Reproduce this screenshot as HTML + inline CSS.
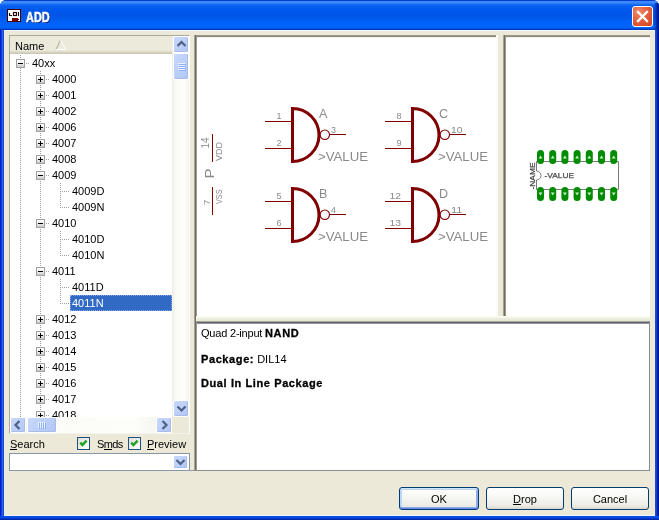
<!DOCTYPE html>
<html><head><meta charset="utf-8">
<style>
*{box-sizing:border-box;margin:0;padding:0}
html,body{width:659px;height:520px;overflow:hidden;background:#fff;font-family:"Liberation Sans",sans-serif;font-size:11px;color:#000}
.a{position:absolute}
#win{left:0;top:0;width:659px;height:520px;border-radius:6px 6px 0 0;background:#0842D6;overflow:hidden}
#title{left:0;top:0;width:659px;height:30px;background:linear-gradient(#0A3CCB 0px,#0A3CCB 1px,#3D8BFF 1px,#3A88FC 3px,#0D62F2 5px,#0058EE 9px,#0055E6 16px,#005EF5 21px,#0066FF 26px,#0062FA 28px,#0040C8 29px,#0036B0 30px)}
#lf{left:0;top:30px;width:4px;height:490px;background:linear-gradient(90deg,#0818CC 0,#0818CC 1px,#0A40E0 1px,#0A40E0 2px,#2264FF 2px,#2264FF 3px,#1A4CC0 3px)}
#rf{left:655px;top:30px;width:4px;height:490px;background:linear-gradient(90deg,#2A48B4 0,#2A48B4 1px,#0A42D2 1px,#0A42D2 2px,#0024A8 2px,#0024A8 3px,#001890 3px)}
#bf{left:0;top:516px;width:659px;height:4px;background:linear-gradient(#0A50EA 0,#0846DE 2px,#0030B8 3px,#001C9C 4px)}
#content{left:4px;top:30px;width:651px;height:486px;background:#ECE9D8;border-top:1px solid #F4F8FF;border-left:1px solid #E4ECFC;border-right:1px solid #E4ECFC;border-bottom:1px solid #F0F4FC}
#ttl{left:26px;top:9px;height:16px;line-height:16px;font-size:14px;font-weight:bold;color:#fff;-webkit-text-stroke:0.5px #fff;text-shadow:1px 1px 0 #0A1E80;transform:scaleX(0.78);transform-origin:0 0}
#close{left:632px;top:6px;width:21px;height:21px;border:1px solid #fff;border-radius:3px;background:radial-gradient(circle at 30% 25%,#F08A6A 0,#E3603E 45%,#D6431C 100%)}
/* tree */
#tvb{left:9px;top:35px;width:181px;height:399px;border-top:1px solid #ACA899;border-left:1px solid #ACA899;border-right:1px solid #fff;border-bottom:1px solid #F4F3EE;background:#fff}
#hdr{left:10px;top:36px;width:162px;height:18px;background:linear-gradient(#EBEADB 0,#EBEADB 14px,#E6E3D2 15px,#DCD8C6 16px,#D0CCBA 17px,#C8C4B2 18px)}
#hdrtxt{left:15px;top:39px;height:14px;line-height:14px;font-size:11px}
#tv{left:10px;top:54px;width:162px;height:363px;overflow:hidden;background:#fff}
.dv{position:absolute;width:1px;background:repeating-linear-gradient(#A0A0A0 0,#A0A0A0 1px,transparent 1px,transparent 2px)}
.dh{position:absolute;height:1px;background:repeating-linear-gradient(90deg,#A0A0A0 0,#A0A0A0 1px,transparent 1px,transparent 2px)}
.bx{position:absolute;width:9px;height:9px;border:1px solid #A0A0A0;background:linear-gradient(#fff 0,#F4F4F4 40%,#C8C8C8 100%)}
.ph{position:absolute;left:1px;top:3px;width:5px;height:1px;background:#000}
.pv{position:absolute;left:3px;top:1px;width:1px;height:5px;background:#000}
.ti{position:absolute;height:16px;line-height:16px;white-space:nowrap}
.sel{position:absolute;height:16px;background:#316AC5;outline:1px dotted #8AA8DC;outline-offset:-1px}
/* scrollbars */
.trk{background:linear-gradient(90deg,#EEEDE5 0,#FBFBF8 25%,#FDFDFA 75%,#F3F2EC 100%)}
.sb{position:absolute;border:1px solid #fff;border-radius:2px;background:linear-gradient(135deg,#C8D8FC 0,#BBCEF8 60%,#B0C6F6 100%);box-shadow:inset -1px -1px 0 #A8BCE8}
.sbt{position:absolute;border:1px solid #fff;border-radius:2px;background:linear-gradient(90deg,#CCDAFC 0,#C2D4FB 50%,#B8CCF8 100%);box-shadow:inset -1px -1px 0 #A8BCE8}
/* panes */
.pane{background:#fff}
.cb{position:absolute;width:13px;height:13px;border:1px solid #1C5180;background:linear-gradient(135deg,#DCDCD7 0,#F6F6F4 70%,#fff 100%)}
.btn{position:absolute;top:487px;height:23px;border:1px solid #003C74;border-radius:3px;background:linear-gradient(#FFFFFF 0,#F8F8F4 40%,#ECEBE4 85%,#D8D5C8 100%);text-align:center;line-height:23px;font-size:11px}
b{letter-spacing:0.6px;-webkit-text-stroke:0.3px #000}
</style></head><body><div id="root" class="a" style="left:0;top:0;width:659px;height:520px;overflow:hidden;will-change:transform">
<div id="win" class="a">
  <div id="title" class="a"></div>
  <div class="a" style="left:654px;top:3px;width:5px;height:27px;background:linear-gradient(90deg,rgba(0,40,170,0) 0,rgba(0,40,170,.5) 1px,#0A3CC0 2px,#0028A8 3px,#001890 4px)"></div>
  <div id="lf" class="a"></div><div id="rf" class="a"></div><div id="bf" class="a"></div>
  <div id="content" class="a"></div>
</div>
<!-- title icon -->
<svg class="a" style="left:7px;top:9px" width="14" height="13" viewBox="0 0 14 13">
  <rect x="0" y="0" width="14" height="13" fill="#3A0010"/>
  <rect x="1" y="1" width="12" height="11" fill="#fff"/>
  <path d="M2.5,4 V6.5 H5" stroke="#1A1A10" stroke-width="1.2" fill="none"/>
  <rect x="6.5" y="3.5" width="3" height="3" fill="none" stroke="#300010" stroke-width="1.2"/>
  <rect x="11" y="3" width="1" height="4" fill="#200010"/>
  <rect x="5" y="9" width="6" height="3" fill="#7A0000"/>
  <rect x="11" y="10" width="1" height="1" fill="#400010"/>
</svg>
<div id="ttl" class="a">ADD</div>
<div id="close" class="a"><svg width="19" height="19" viewBox="0 0 19 19" style="position:absolute;left:0;top:0"><path d="M5,5 L14,14 M14,5 L5,14" stroke="#fff" stroke-width="2.3" stroke-linecap="square"/></svg></div>

<!-- tree view -->
<div id="tvb" class="a"></div>
<div id="hdr" class="a"></div>
<div id="hdrtxt" class="a">Name</div>
<svg class="a" style="left:55px;top:39px" width="12" height="12" viewBox="0 0 12 12"><path d="M1,10.5 L5.5,1" stroke="#ACA899" stroke-width="1"/><path d="M5.5,1 L10.5,10.5 H1" stroke="#fff" stroke-width="1" fill="none"/></svg>
<div id="tv" class="a">
<div class="dv" style="left:10px;top:1px;height:4px"></div>
<div class="dv" style="left:10px;top:14px;height:363px"></div>
<div class="dv" style="left:30px;top:17px;height:360px"></div>
<div class="dh" style="left:16px;top:9px;width:4px"></div>
<div class="bx" style="left:6px;top:5px"><i class="ph"></i></div>
<div class="ti" style="left:22px;top:1px">40xx</div>
<div class="dh" style="left:36px;top:25px;width:4px"></div>
<div class="bx" style="left:26px;top:21px"><i class="ph"></i><i class="pv"></i></div>
<div class="ti" style="left:42px;top:17px">4000</div>
<div class="dh" style="left:36px;top:41px;width:4px"></div>
<div class="bx" style="left:26px;top:37px"><i class="ph"></i><i class="pv"></i></div>
<div class="ti" style="left:42px;top:33px">4001</div>
<div class="dh" style="left:36px;top:57px;width:4px"></div>
<div class="bx" style="left:26px;top:53px"><i class="ph"></i><i class="pv"></i></div>
<div class="ti" style="left:42px;top:49px">4002</div>
<div class="dh" style="left:36px;top:73px;width:4px"></div>
<div class="bx" style="left:26px;top:69px"><i class="ph"></i><i class="pv"></i></div>
<div class="ti" style="left:42px;top:65px">4006</div>
<div class="dh" style="left:36px;top:89px;width:4px"></div>
<div class="bx" style="left:26px;top:85px"><i class="ph"></i><i class="pv"></i></div>
<div class="ti" style="left:42px;top:81px">4007</div>
<div class="dh" style="left:36px;top:105px;width:4px"></div>
<div class="bx" style="left:26px;top:101px"><i class="ph"></i><i class="pv"></i></div>
<div class="ti" style="left:42px;top:97px">4008</div>
<div class="dh" style="left:36px;top:121px;width:4px"></div>
<div class="bx" style="left:26px;top:117px"><i class="ph"></i></div>
<div class="ti" style="left:42px;top:113px">4009</div>
<div class="dv" style="left:50px;top:129px;height:9px"></div>
<div class="dh" style="left:52px;top:137px;width:7px"></div>
<div class="ti" style="left:62px;top:129px">4009D</div>
<div class="dv" style="left:50px;top:137px;height:17px"></div>
<div class="dh" style="left:52px;top:153px;width:7px"></div>
<div class="ti" style="left:62px;top:145px">4009N</div>
<div class="dh" style="left:36px;top:169px;width:4px"></div>
<div class="bx" style="left:26px;top:165px"><i class="ph"></i></div>
<div class="ti" style="left:42px;top:161px">4010</div>
<div class="dv" style="left:50px;top:177px;height:9px"></div>
<div class="dh" style="left:52px;top:185px;width:7px"></div>
<div class="ti" style="left:62px;top:177px">4010D</div>
<div class="dv" style="left:50px;top:185px;height:17px"></div>
<div class="dh" style="left:52px;top:201px;width:7px"></div>
<div class="ti" style="left:62px;top:193px">4010N</div>
<div class="dh" style="left:36px;top:217px;width:4px"></div>
<div class="bx" style="left:26px;top:213px"><i class="ph"></i></div>
<div class="ti" style="left:42px;top:209px">4011</div>
<div class="dv" style="left:50px;top:225px;height:9px"></div>
<div class="dh" style="left:52px;top:233px;width:7px"></div>
<div class="ti" style="left:62px;top:225px">4011D</div>
<div class="dv" style="left:50px;top:233px;height:17px"></div>
<div class="dh" style="left:52px;top:249px;width:7px"></div>
<div class="sel" style="left:60px;top:241px;width:102px"></div>
<div class="ti" style="left:62px;top:241px;color:#fff">4011N</div>
<div class="dh" style="left:36px;top:265px;width:4px"></div>
<div class="bx" style="left:26px;top:261px"><i class="ph"></i><i class="pv"></i></div>
<div class="ti" style="left:42px;top:257px">4012</div>
<div class="dh" style="left:36px;top:281px;width:4px"></div>
<div class="bx" style="left:26px;top:277px"><i class="ph"></i><i class="pv"></i></div>
<div class="ti" style="left:42px;top:273px">4013</div>
<div class="dh" style="left:36px;top:297px;width:4px"></div>
<div class="bx" style="left:26px;top:293px"><i class="ph"></i><i class="pv"></i></div>
<div class="ti" style="left:42px;top:289px">4014</div>
<div class="dh" style="left:36px;top:313px;width:4px"></div>
<div class="bx" style="left:26px;top:309px"><i class="ph"></i><i class="pv"></i></div>
<div class="ti" style="left:42px;top:305px">4015</div>
<div class="dh" style="left:36px;top:329px;width:4px"></div>
<div class="bx" style="left:26px;top:325px"><i class="ph"></i><i class="pv"></i></div>
<div class="ti" style="left:42px;top:321px">4016</div>
<div class="dh" style="left:36px;top:345px;width:4px"></div>
<div class="bx" style="left:26px;top:341px"><i class="ph"></i><i class="pv"></i></div>
<div class="ti" style="left:42px;top:337px">4017</div>
<div class="dh" style="left:36px;top:361px;width:4px"></div>
<div class="bx" style="left:26px;top:357px"><i class="ph"></i><i class="pv"></i></div>
<div class="ti" style="left:42px;top:353px">4018</div>
</div>
<!-- vscroll -->
<div class="a trk" style="left:172px;top:36px;width:17px;height:381px"></div>
<div class="sb" style="left:173px;top:36px;width:16px;height:17px"><svg width="15" height="15" viewBox="0 0 15 15" style="position:absolute;left:0;top:0"><path d="M3.5,9 L7.5,5 L11.5,9" stroke="#4D6185" stroke-width="2.2" fill="none"/></svg></div>
<div class="sb" style="left:173px;top:53px;width:16px;height:27px;"><svg width="15" height="25" style="position:absolute;left:0;top:0"><path d="M4,9.5 H11 M4,11.5 H11 M4,13.5 H11 M4,15.5 H11" stroke="#EEF4FE" stroke-width="1"/><path d="M5,10.5 H12 M5,12.5 H12 M5,14.5 H12 M5,16.5 H12" stroke="#8CB0F8" stroke-width="1"/></svg></div>
<div class="sb" style="left:173px;top:400px;width:16px;height:17px"><svg width="15" height="15" viewBox="0 0 15 15" style="position:absolute;left:0;top:0"><path d="M3.5,5.5 L7.5,9.5 L11.5,5.5" stroke="#4D6185" stroke-width="2.2" fill="none"/></svg></div>
<!-- hscroll -->
<div class="a trk" style="left:10px;top:417px;width:162px;height:16px"></div>
<div class="sb" style="left:10px;top:417px;width:16px;height:16px"><svg width="14" height="14" viewBox="0 0 14 14" style="position:absolute;left:0;top:0"><path d="M8.5,3 L4.5,7 L8.5,11" stroke="#4D6185" stroke-width="2.2" fill="none"/></svg></div>
<div class="sb" style="left:27px;top:417px;width:30px;height:16px"><svg width="28" height="14" style="position:absolute;left:0;top:0"><path d="M10.5,4 V10 M12.5,4 V10 M14.5,4 V10 M16.5,4 V10" stroke="#EEF4FE" stroke-width="1"/><path d="M11.5,5 V11 M13.5,5 V11 M15.5,5 V11 M17.5,5 V11" stroke="#8CB0F8" stroke-width="1"/></svg></div>
<div class="sb" style="left:156px;top:417px;width:16px;height:16px"><svg width="14" height="14" viewBox="0 0 14 14" style="position:absolute;left:0;top:0"><path d="M5.5,3 L9.5,7 L5.5,11" stroke="#4D6185" stroke-width="2.2" fill="none"/></svg></div>
<div class="a" style="left:172px;top:417px;width:17px;height:16px;background:#ECE9D8"></div>

<!-- search row -->
<div class="a" style="left:10px;top:437px;height:14px;line-height:14px"><span style="border-bottom:1px solid #000;line-height:10px;display:inline-block">S</span>earch</div>
<div class="cb" style="left:77px;top:437px"><svg width="11" height="11" viewBox="0 0 11 11" style="position:absolute;left:0;top:0"><path d="M2.3,4.6 L4.4,7 L8.6,2.6" stroke="#21A121" stroke-width="2.5" fill="none"/></svg></div>
<div class="a" style="left:97px;top:437px;height:14px;line-height:14px;letter-spacing:-0.6px">S<span style="border-bottom:1px solid #000;line-height:10px;display:inline-block">m</span>ds</div>
<div class="cb" style="left:128px;top:437px"><svg width="11" height="11" viewBox="0 0 11 11" style="position:absolute;left:0;top:0"><path d="M2.3,4.6 L4.4,7 L8.6,2.6" stroke="#21A121" stroke-width="2.5" fill="none"/></svg></div>
<div class="a" style="left:147px;top:437px;height:14px;line-height:14px"><span style="border-bottom:1px solid #000;line-height:10px;display:inline-block">P</span>review</div>
<!-- combo -->
<div class="a" style="left:9px;top:453px;width:181px;height:18px;border:1px solid #8797A8;background:#fff"></div>
<div class="a" style="left:190px;top:470px;width:4px;height:1px;background:#9A9A98"></div>
<div class="sb" style="left:173px;top:455px;width:15px;height:14px"><svg width="13" height="12" viewBox="0 0 13 12" style="position:absolute;left:0;top:0"><path d="M2.5,4 L6.5,8 L10.5,4" stroke="#4D6185" stroke-width="2.2" fill="none"/></svg></div>

<!-- schematic pane -->
<div class="a" style="left:194px;top:35px;width:304px;height:282px;background:linear-gradient(90deg,#A4A296 0,#A4A296 1px,#716F64 1px,#716F64 2px,#9C998C 2px,#9C998C 3px,transparent 3px),linear-gradient(#9C9888 0,#9C9888 1px,#8C887C 1px,#8C887C 2px,#F0F0EC 2px,#F0F0EC 3px,transparent 3px),#fff;box-shadow:inset -2px 0 0 #FBFBFB,inset 0 -1px 0 #FAFCF0"></div>
<svg class="a" style="left:0;top:0" width="659" height="520" viewBox="0 0 659 520"><g font-family="Liberation Sans" fill="#8a8a8a"><path d="M292.5,108.5 L292.5,161.5 A26.5,26.5 0 0 0 292.5,108.5 Z" fill="none" stroke="#800000" stroke-width="3"/>
<path d="M265,121.5 H291 M265,148.5 H291 M329,134.5 H346" stroke="#800000" stroke-width="1" fill="none"/>
<circle cx="324.8" cy="134.7" r="4.7" fill="none" stroke="#800000" stroke-width="1.1"/>
<text x="281.5" y="119.2" font-size="9" text-anchor="end">1</text>
<text x="281.5" y="146.2" font-size="9" text-anchor="end">2</text>
<text x="331" y="132.5" font-size="9">3</text>
<text x="319" y="118" font-size="12.5">A</text>
<text x="318" y="160.5" font-size="13.3" textLength="50" lengthAdjust="spacingAndGlyphs">&gt;VALUE</text>
<path d="M412.5,108.5 L412.5,161.5 A26.5,26.5 0 0 0 412.5,108.5 Z" fill="none" stroke="#800000" stroke-width="3"/>
<path d="M385,121.5 H411 M385,148.5 H411 M449,134.5 H466" stroke="#800000" stroke-width="1" fill="none"/>
<circle cx="444.8" cy="134.7" r="4.7" fill="none" stroke="#800000" stroke-width="1.1"/>
<text x="401.5" y="119.2" font-size="9" text-anchor="end">8</text>
<text x="401.5" y="146.2" font-size="9" text-anchor="end">9</text>
<text x="451" y="132.5" font-size="9" textLength="11.5" lengthAdjust="spacingAndGlyphs">10</text>
<text x="439" y="118" font-size="12.5">C</text>
<text x="438" y="160.5" font-size="13.3" textLength="50" lengthAdjust="spacingAndGlyphs">&gt;VALUE</text>
<path d="M292.5,188.5 L292.5,241.5 A26.5,26.5 0 0 0 292.5,188.5 Z" fill="none" stroke="#800000" stroke-width="3"/>
<path d="M265,201.5 H291 M265,228.5 H291 M329,214.5 H346" stroke="#800000" stroke-width="1" fill="none"/>
<circle cx="324.8" cy="214.7" r="4.7" fill="none" stroke="#800000" stroke-width="1.1"/>
<text x="281.5" y="199.2" font-size="9" text-anchor="end">5</text>
<text x="281.5" y="226.2" font-size="9" text-anchor="end">6</text>
<text x="331" y="212.5" font-size="9">4</text>
<text x="319" y="198" font-size="12.5">B</text>
<text x="318" y="240.5" font-size="13.3" textLength="50" lengthAdjust="spacingAndGlyphs">&gt;VALUE</text>
<path d="M412.5,188.5 L412.5,241.5 A26.5,26.5 0 0 0 412.5,188.5 Z" fill="none" stroke="#800000" stroke-width="3"/>
<path d="M385,201.5 H411 M385,228.5 H411 M449,214.5 H466" stroke="#800000" stroke-width="1" fill="none"/>
<circle cx="444.8" cy="214.7" r="4.7" fill="none" stroke="#800000" stroke-width="1.1"/>
<text x="389.5" y="199.2" font-size="9" textLength="11.5" lengthAdjust="spacingAndGlyphs">12</text>
<text x="389.5" y="226.2" font-size="9" textLength="11.5" lengthAdjust="spacingAndGlyphs">13</text>
<text x="451" y="212.5" font-size="9" textLength="11.5" lengthAdjust="spacingAndGlyphs">11</text>
<text x="439" y="198" font-size="12.5">D</text>
<text x="438" y="240.5" font-size="13.3" textLength="50" lengthAdjust="spacingAndGlyphs">&gt;VALUE</text>
<path d="M212.5,134 V162 M212.5,187 V215" stroke="#800000" stroke-width="1"/>
<text transform="translate(209,148.5) rotate(-90)" font-size="10" textLength="11" lengthAdjust="spacingAndGlyphs">14</text>
<text transform="translate(222,161) rotate(-90)" font-size="9.5" textLength="19" lengthAdjust="spacingAndGlyphs">VDD</text>
<text transform="translate(213.5,178.5) rotate(-90)" font-size="13" textLength="10" lengthAdjust="spacingAndGlyphs">P</text>
<text transform="translate(210,205) rotate(-90)" font-size="9.5">7</text>
<text transform="translate(222,204) rotate(-90)" font-size="9.5" textLength="14.5" lengthAdjust="spacingAndGlyphs">VSS</text></g></svg>
<!-- package pane -->
<div class="a" style="left:503px;top:35px;width:147px;height:282px;background:linear-gradient(90deg,#A4A296 0,#A4A296 1px,#716F64 1px,#716F64 2px,#9C998C 2px,#9C998C 3px,transparent 3px),linear-gradient(#9C9888 0,#9C9888 1px,#8C887C 1px,#8C887C 2px,#F0F0EC 2px,#F0F0EC 3px,transparent 3px),#fff;box-shadow:inset 0 -1px 0 #FAFCF0"></div>
<svg class="a" style="left:0;top:0" width="659" height="520" viewBox="0 0 659 520"><g font-family="Liberation Sans"><path d="M536.5,161.5 H618.5 V189.5 H536.5 V180 A4.5,4.5 0 0 0 536.5,171 Z" fill="none" stroke="#7a7a7a" stroke-width="1"/>
<rect x="537.0" y="150" width="7" height="14" rx="3.5" ry="3.5" fill="#008c00"/>
<path d="M538.5,158.5 L540.5,155.5 L542.5,158.5 Z" fill="#c8ecc8"/>
<rect x="537.0" y="187" width="7" height="14" rx="3.5" ry="3.5" fill="#008c00"/>
<path d="M538.5,192.5 L540.5,195.5 L542.5,192.5 Z" fill="#c8ecc8"/>
<rect x="549.2" y="150" width="7" height="14" rx="3.5" ry="3.5" fill="#008c00"/>
<path d="M550.7,158.5 L552.7,155.5 L554.7,158.5 Z" fill="#c8ecc8"/>
<rect x="549.2" y="187" width="7" height="14" rx="3.5" ry="3.5" fill="#008c00"/>
<path d="M550.7,192.5 L552.7,195.5 L554.7,192.5 Z" fill="#c8ecc8"/>
<rect x="561.4" y="150" width="7" height="14" rx="3.5" ry="3.5" fill="#008c00"/>
<path d="M562.9,158.5 L564.9,155.5 L566.9,158.5 Z" fill="#c8ecc8"/>
<rect x="561.4" y="187" width="7" height="14" rx="3.5" ry="3.5" fill="#008c00"/>
<path d="M562.9,192.5 L564.9,195.5 L566.9,192.5 Z" fill="#c8ecc8"/>
<rect x="573.6" y="150" width="7" height="14" rx="3.5" ry="3.5" fill="#008c00"/>
<path d="M575.1,158.5 L577.1,155.5 L579.1,158.5 Z" fill="#c8ecc8"/>
<rect x="573.6" y="187" width="7" height="14" rx="3.5" ry="3.5" fill="#008c00"/>
<path d="M575.1,192.5 L577.1,195.5 L579.1,192.5 Z" fill="#c8ecc8"/>
<rect x="585.8" y="150" width="7" height="14" rx="3.5" ry="3.5" fill="#008c00"/>
<path d="M587.3,158.5 L589.3,155.5 L591.3,158.5 Z" fill="#c8ecc8"/>
<rect x="585.8" y="187" width="7" height="14" rx="3.5" ry="3.5" fill="#008c00"/>
<path d="M587.3,192.5 L589.3,195.5 L591.3,192.5 Z" fill="#c8ecc8"/>
<rect x="598.0" y="150" width="7" height="14" rx="3.5" ry="3.5" fill="#008c00"/>
<path d="M599.5,158.5 L601.5,155.5 L603.5,158.5 Z" fill="#c8ecc8"/>
<rect x="598.0" y="187" width="7" height="14" rx="3.5" ry="3.5" fill="#008c00"/>
<path d="M599.5,192.5 L601.5,195.5 L603.5,192.5 Z" fill="#c8ecc8"/>
<rect x="610.2" y="150" width="7" height="14" rx="3.5" ry="3.5" fill="#008c00"/>
<path d="M611.7,158.5 L613.7,155.5 L615.7,158.5 Z" fill="#c8ecc8"/>
<rect x="610.2" y="187" width="7" height="14" rx="3.5" ry="3.5" fill="#008c00"/>
<path d="M611.7,192.5 L613.7,195.5 L615.7,192.5 Z" fill="#c8ecc8"/>
<text transform="translate(535,189.5) rotate(-90)" font-size="8" fill="#484848" stroke="#484848" stroke-width="0.25" textLength="27" lengthAdjust="spacingAndGlyphs">-NAME</text>
<text x="544.5" y="177.8" font-size="8" fill="#484848" stroke="#484848" stroke-width="0.25" textLength="29.5" lengthAdjust="spacingAndGlyphs">-VALUE</text></g></svg>
<!-- description pane -->
<div class="a" style="left:194px;top:321px;width:456px;height:150px;background:linear-gradient(90deg,#A4A296 0,#A4A296 1px,#716F64 1px,#716F64 2px,#9C998C 2px,#9C998C 3px,transparent 3px),linear-gradient(#A8A898 0,#A8A898 1px,#646470 1px,#646470 2px,#9494A0 2px,#9494A0 3px,transparent 3px),#fff;box-shadow:inset -1px -1px 0 #8A8E94"></div>
<div class="a" style="left:197px;top:316px;width:453px;height:5px;background:linear-gradient(#FAFCF0 0,#FAFCF0 1px,#F0F0E2 2px,#E6E6D6 5px)"></div>
<div class="a" style="left:194px;top:316px;width:3px;height:5px;background:linear-gradient(90deg,#A4A296 0,#A4A296 1px,#716F64 1px,#716F64 2px,#F4F2EA 2px)"></div>
<div class="a" style="left:201px;top:326px;line-height:14px;white-space:nowrap"><span style="letter-spacing:-0.2px">Quad 2-input </span><b>NAND</b></div>
<div class="a" style="left:201px;top:352px;line-height:14px;white-space:nowrap"><b>Package:</b> DIL14</div>
<div class="a" style="left:201px;top:376px;line-height:14px;white-space:nowrap"><b>Dual In Line Package</b></div>

<!-- buttons -->
<div class="btn" style="left:399px;width:80px;box-shadow:inset 0 1px 0 #CEE7FF,inset 0 -1px 0 #6982EE,inset 1px 0 0 #B8D6FB,inset -1px 0 0 #91A8EF,inset 0 2px 0 #BCD4F6,inset 0 -2px 0 #89ADE4,inset 2px 0 0 #BCD4F6,inset -2px 0 0 #89ADE4">OK</div>
<div class="btn" style="left:486px;width:78px"><span style="border-bottom:1px solid #000;line-height:10px;display:inline-block">D</span>rop</div>
<div class="btn" style="left:571px;width:78px">Cancel</div>
</div></body></html>
